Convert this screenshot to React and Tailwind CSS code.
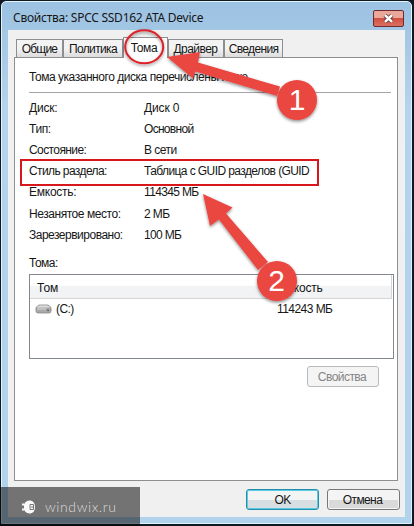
import React from "react";

const rows = [
  ["Диск:", "Диск 0", "tracking-[-0.2px]", "tracking-[-0.15px]"],
  ["Тип:", "Основной", "tracking-[-0.4px]", "tracking-[-0.7px]"],
  ["Состояние:", "В сети", "tracking-[-0.6px]", "tracking-[-0.5px]"],
  ["Стиль раздела:", "Таблица с GUID разделов (GUID", "tracking-[-0.6px]", "tracking-[-0.59px]"],
  ["Емкость:", "114345 МБ", "tracking-[-0.25px]", "tracking-[-0.65px]"],
  ["Незанятое место:", "2 МБ", "tracking-[-0.45px]", "tracking-[-0.6px]"],
  ["Зарезервировано:", "100 МБ", "tracking-[-0.5px]", "tracking-[-0.65px]"],
];

function Tab({ children, className = "" }) {
  return (
    <div className={`flex h-[18px] items-center justify-center border border-b-0 border-[#8c8e92] bg-linear-to-b from-[#f3f3f3] from-50% to-[#dcdcdc] whitespace-nowrap ${className}`}>
      {children}
    </div>
  );
}

function Button({ children, className = "" }) {
  return (
    <button className={`flex h-[21px] items-center justify-center rounded-[3px] border ${className}`}>
      {children}
    </button>
  );
}

function DriveIcon() {
  return (
    <svg width="17" height="10" viewBox="0 0 17 10">
      <path d="M1 3.5 4 1h9l3 2.5V7q0 2-2 2H3Q1 9 1 7Z" fill="#a9a9a9" stroke="#858585" strokeWidth=".8" />
      <path d="M1.5 3.6 4.3 1.4h8.4l2.8 2.2Z" fill="#dedede" />
      <path d="M2 5h9" stroke="#d8d8d8" />
      <circle cx="13" cy="6.2" r="1" fill="#626262" />
    </svg>
  );
}

function Annotations() {
  return (
    <svg className="pointer-events-none absolute inset-0 z-20" width="414" height="526" viewBox="0 0 414 526">
      <defs>
        <filter id="shadow" x="-20%" y="-20%" width="140%" height="150%">
          <feDropShadow dx="0" dy="1.5" stdDeviation="1.5" floodColor="#000" floodOpacity=".45" />
        </filter>
      </defs>
      <ellipse cx="144.2" cy="46.8" rx="19" ry="16.5" fill="none" stroke="#d92229" strokeWidth="2" filter="url(#shadow)" />
      <rect x="21" y="160" width="297" height="25" fill="none" stroke="#d7171c" strokeWidth="2" />
      <g fill="#e94641" filter="url(#shadow)">
        <path d="M167 57 200 52 198 62.500 280 86.500 277 96 195.500 71.500 193 78.500Z" />
        <circle cx="297" cy="100" r="20" />
      </g>
      <g fill="#e94641" filter="url(#shadow)">
        <path d="M203 194 232.500 207.500 226 213.500 268 262 258 270 219 219.500 210 226Z" />
        <circle cx="277" cy="281" r="20" />
      </g>
      <g fill="#fff" fontFamily="Liberation Sans, Arial, sans-serif" fontSize="30" textAnchor="middle">
        <text x="297" y="110">1</text>
        <text x="276.500" y="291">2</text>
      </g>
    </svg>
  );
}

export default function App() {
  return (
    <div className="relative h-[526px] w-[414px] overflow-hidden bg-[#0d1a24] pt-px pr-[2px] pb-[2px] pl-px font-['Liberation_Sans',Arial,sans-serif] text-[12px] leading-[14px] text-[#161616]">
      <div className="flex h-[523px] flex-col rounded-t-[5px] border border-[#e2f3fb] bg-linear-to-b from-[#9cc2e2] via-[#b4d3ec] via-20% to-[#b1d3ec] px-[6px] pb-[6px]">
        <header className="flex h-[28px] shrink-0 items-start justify-between pr-px pl-[5px]">
          <h1 className="pt-[9px] font-['Noto_Sans','Open_Sans',sans-serif] text-[12px] tracking-[-0.25px] whitespace-nowrap">Свойства: SPCC SSD162 ATA Device</h1>
          <div className="mt-[8px] flex h-[17px] w-[31px] items-center justify-center rounded-[2px] border border-[#6d2b30] bg-linear-to-b from-[#eaa79a] from-45% via-[#cf4f40] via-50% to-[#dc7060]">
            <svg width="13" height="11" viewBox="0 0 13 11">
              <path d="m3 2.200 7 6.600m0-6.600-7 6.600" stroke="#673b3d" strokeWidth="4.200" />
              <path d="m3 2.200 7 6.600m0-6.600-7 6.600" stroke="#fff" strokeWidth="2.500" />
            </svg>
          </div>
        </header>

        <main className="flex min-h-0 flex-1 flex-col bg-[#f0f0f0] px-[6px] pt-[7px]">
          <nav className="flex h-[20px] shrink-0 items-end pl-[2px]">
            <Tab className="w-[47px] tracking-[-0.8px]">Общие</Tab>
            <Tab className="w-[60px] tracking-[-0.65px]">Политика</Tab>
            <div className="z-10 -mb-px flex h-[21px] w-[45px] items-center justify-center border border-b-0 border-[#8c8e92] bg-white pr-[3px] pb-px tracking-[-0.4px]">Тома</div>
            <Tab className="w-[56px] pr-px tracking-[-0.55px]">Драйвер</Tab>
            <Tab className="w-[59px] tracking-[-0.65px]">Сведения</Tab>
          </nav>

          <section className="flex h-[424px] w-[384px] shrink-0 flex-col border border-[#8c8e92] bg-white pr-[2px] pl-[14px]">
            <p className="mr-[4px] h-[35px] border-b border-[#a5a5a5] pt-[12px] tracking-[-0.46px] whitespace-nowrap">Тома указанного диска перечислены ниже</p>
            <dl className="mt-[4px]">
              {rows.map(([label, value, a, b]) => (
                <div className="flex h-[21.200px] items-center whitespace-nowrap" key={label}>
                  <dt className={`w-[115px] ${a}`}>{label}</dt>
                  <dd className={b}>{value}</dd>
                </div>
              ))}
            </dl>
            <p className="mt-[11px] h-[18px] tracking-[-0.5px]">Тома:</p>
            <div className="h-[85px] w-[365px] shrink-0 border border-[#828790] bg-white">
              <div className="mr-px flex h-[24px] items-center border-r border-b border-[#d5d5d5] bg-linear-to-b from-white from-45% to-[#f2f3f5] to-50% pt-[3px] pl-[7px]">
                <span className="w-[241px]">Том</span>
                <span className="tracking-[-0.2px]">Емкость</span>
              </div>
              <div className="flex h-[21px] items-center pb-px pl-[5px]">
                <DriveIcon />
                <span className="ml-[4px] w-[221px] tracking-[-0.6px]">(C:)</span>
                <span className="tracking-[-0.55px]">114243 МБ</span>
              </div>
            </div>
            <Button className="mt-[7px] mr-[16px] w-[72px] self-end border-[#b7bbbd] bg-[#f4f4f4] pr-[2px] tracking-[-0.55px] text-[#858585]">Свойства</Button>
          </section>

          <footer className="mt-[8px] flex justify-end gap-[8px]">
            <Button className="w-[73px] border-[#248da9] bg-linear-to-b from-[#f3f5f5] from-50% to-[#d7dfe2] to-50% tracking-[-0.6px] shadow-[inset_0_0_0_1px_#5bcbe3]">OK</Button>
            <Button className="-mr-px w-[73px] border-[#777] bg-linear-to-b from-[#f4f4f4] from-50% to-[#dadada] to-50% pr-[2px] tracking-[-0.6px] shadow-[inset_0_0_0_1px_#f5f5f5]">Отмена</Button>
          </footer>
        </main>
      </div>

      <Annotations />

      <div className="absolute bottom-0 left-0 flex h-[39px] w-[140px] items-center bg-black/52 pl-[21px]">
        <svg width="16" height="14" viewBox="0 0 16 14">
          <path d="M4 2.500Q6 .5 8.500 .5h1q4.500 1 4.500 6.500t-4.500 6.500h-1Q6 13.500 4 11.500V10.500H1V8.500h2V5.500H1v-2h3Z" fill="#f8f8f8" />
          <path d="M12.500 4.500H9v5h3.500zM11 6v2" fill="none" stroke="#777" />
        </svg>
        <span className="ml-[8px] font-['Lato_Light','Lato',sans-serif] text-[14px] font-light tracking-[0.6px] text-[#dadada]">windwix.ru</span>
      </div>
    </div>
  );
}
